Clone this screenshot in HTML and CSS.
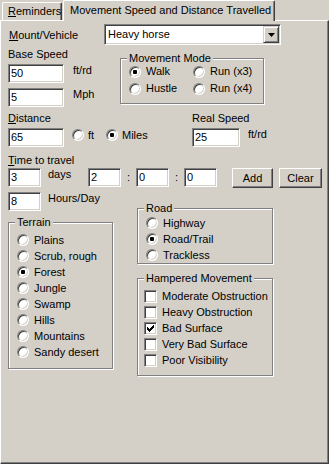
FILE: index.html
```html
<!DOCTYPE html>
<html>
<head>
<meta charset="utf-8">
<link rel="stylesheet" href="styles.css">
</head>
<body>
<div class="tabs">
  <div class="tab"><u>R</u>eminders</div>
  <div class="tab active">Movement Speed and Distance Travelled</div>
</div>
<div class="panel">
  <div class="mount">
    <div class="mount-lbl"><u>M</u>ount/Vehicle</div>
    <div class="combo">
      <div class="combo-text">Heavy horse</div>
      <div class="combo-btn"><svg width="7" height="4" viewBox="0 0 7 4"><polygon points="0,0 7,0 3.5,4" fill="#000"/></svg></div>
    </div>
  </div>

  <div class="speed">
    <div class="speed-col">
      <div class="lbl">Base Speed</div>
      <div class="fieldrow"><div class="edit w56">50</div><span class="unit">ft/rd</span></div>
      <div class="fieldrow r2"><div class="edit w56">5</div><span class="unit">Mph</span></div>
    </div>
    <div class="group g-move">
      <div class="gtitle">Movement Mode</div>
      <div class="opts2">
        <div class="opt"><span class="radio on"></span>Walk</div>
        <div class="opt"><span class="radio"></span>Run (x3)</div>
        <div class="opt"><span class="radio"></span>Hustle</div>
        <div class="opt"><span class="radio"></span>Run (x4)</div>
      </div>
    </div>
  </div>

  <div class="dist">
    <div class="dist-left">
      <div class="lbl"><u>D</u>istance</div>
      <div class="fieldrow">
        <div class="edit w56">65</div>
        <div class="opt dopt ft"><span class="radio"></span>ft</div>
        <div class="opt dopt"><span class="radio on"></span>Miles</div>
      </div>
    </div>
    <div class="dist-right">
      <div class="lbl">Real Speed</div>
      <div class="fieldrow"><div class="edit w48">25</div><span class="unit u8">ft/rd</span></div>
    </div>
  </div>

  <div class="lbl time-lbl"><u>T</u>ime to travel</div>
  <div class="time-row">
    <div class="edit w33">3</div>
    <span class="days">days</span>
    <div class="edit w33">2</div>
    <span class="colon">:</span>
    <div class="edit w33">0</div>
    <span class="colon">:</span>
    <div class="edit w33">0</div>
    <div class="btn add">Add</div>
    <div class="btn clear">Clear</div>
  </div>

  <div class="lower">
    <div class="lower-left">
      <div class="hours-row">
        <div class="edit w33">8</div>
        <span class="days">Hours/Day</span>
      </div>
      <div class="group g-terrain">
        <div class="gtitle">Terrain</div>
        <div class="opts1">
          <div class="opt"><span class="radio"></span>Plains</div>
          <div class="opt"><span class="radio"></span>Scrub, rough</div>
          <div class="opt"><span class="radio on"></span>Forest</div>
          <div class="opt"><span class="radio"></span>Jungle</div>
          <div class="opt"><span class="radio"></span>Swamp</div>
          <div class="opt"><span class="radio"></span>Hills</div>
          <div class="opt"><span class="radio"></span>Mountains</div>
          <div class="opt"><span class="radio"></span>Sandy desert</div>
        </div>
      </div>
    </div>
    <div class="lower-right">
      <div class="group g-road">
        <div class="gtitle">Road</div>
        <div class="opts1">
          <div class="opt"><span class="radio"></span>Highway</div>
          <div class="opt"><span class="radio on"></span>Road/Trail</div>
          <div class="opt"><span class="radio"></span>Trackless</div>
        </div>
      </div>
      <div class="group g-hamp">
        <div class="gtitle">Hampered Movement</div>
        <div class="opts1">
          <div class="opt"><span class="check"></span>Moderate Obstruction</div>
          <div class="opt"><span class="check"></span>Heavy Obstruction</div>
          <div class="opt"><span class="check"><svg width="7" height="7" viewBox="0 0 7 7" shape-rendering="crispEdges"><rect x="6" y="0" width="1" height="1"/><rect x="5" y="1" width="2" height="1"/><rect x="0" y="2" width="1" height="1"/><rect x="4" y="2" width="3" height="1"/><rect x="0" y="3" width="2" height="1"/><rect x="3" y="3" width="3" height="1"/><rect x="0" y="4" width="5" height="1"/><rect x="1" y="5" width="3" height="1"/><rect x="2" y="6" width="1" height="1"/></svg></span>Bad Surface</div>
          <div class="opt"><span class="check"></span>Very Bad Surface</div>
          <div class="opt"><span class="check"></span>Poor Visibility</div>
        </div>
      </div>
    </div>
  </div>
</div>
</body>
</html>
```
FILE: styles.css
```css
* { box-sizing: border-box; }
html, body { margin: 0; padding: 0; }
body {
  width: 329px;
  height: 464px;
  overflow: hidden;
  background: #d4d0c8;
  font-family: "Liberation Sans", Arial, sans-serif;
  font-size: 11px;
  color: #000;
}
u { text-decoration: underline; text-underline-offset: 1px; }

/* Tabs */
.tabs { display: flex; align-items: flex-end; height: 20px; }
.tab {
  height: 18px;
  width: 60px;
  margin-left: 2px;
  padding-left: 5px;
  line-height: 17px;
  white-space: nowrap;
  background: #d4d0c8;
  border: 1px solid;
  border-color: #fff #404040 transparent #fff;
  border-bottom: 0;
  border-radius: 2px 2px 0 0;
  box-shadow: inset -1px 0 #808080;
}
.tab.active {
  position: relative;
  z-index: 1;
  height: 21px;
  width: 212px;
  margin-left: 1px;
  margin-bottom: -1px;
  padding-left: 6px;
  line-height: 18px;
}

/* Panel */
.panel {
  height: 444px;
  border: 1px solid;
  border-color: #fff #404040 #404040 #fff;
  box-shadow: inset -1px -1px #808080;
  padding-left: 7px;
}

.lbl { height: 13px; line-height: 13px; white-space: nowrap; }

/* Mount row */
.mount { display: flex; align-items: center; height: 21px; margin-top: 3px; }
.mount-lbl { width: 96px; padding-left: 1px; white-space: nowrap; }
.combo {
  display: flex;
  width: 177px;
  height: 21px;
  padding: 1px;
  background: #fff;
  border: 1px solid;
  border-color: #808080 #fff #fff #808080;
  box-shadow: inset 1px 1px #404040, inset -1px -1px #d4d0c8;
}
.combo-text { flex: 1; padding-left: 2px; line-height: 17px; }
.combo-btn {
  width: 16px;
  height: 17px;
  display: flex;
  align-items: center;
  justify-content: center;
  background: #d4d0c8;
  border: 1px solid;
  border-color: #d4d0c8 #404040 #404040 #d4d0c8;
  box-shadow: inset 1px 1px #fff, inset -1px -1px #808080;
}

/* Edits */
.edit {
  height: 19px;
  padding-left: 2px;
  line-height: 17px;
  background: #fff;
  border: 1px solid;
  border-color: #808080 #fff #fff #808080;
  box-shadow: inset 1px 1px #404040, inset -1px -1px #d4d0c8;
  flex: none;
}
.w56 { width: 56px; }
.w48 { width: 48px; }
.w33 { width: 33px; }

.fieldrow { display: flex; align-items: flex-start; margin-top: 3px; }
.fieldrow.r2 { margin-top: 5px; }
.unit { margin-left: 9px; line-height: 13px; white-space: nowrap; }
.unit.u8 { margin-left: 8px; }

/* Speed row */
.speed { display: flex; align-items: flex-start; }
.speed-col { width: 112px; padding-top: 3px; }

/* Group boxes */
.group {
  border: 1px solid #808080;
  box-shadow: inset 1px 1px #fff, 1px 1px #fff;
  flex: none;
}
.gtitle {
  width: fit-content;
  height: 12px;
  margin: -7px 0 0 6px;
  padding: 0 2px;
  line-height: 12px;
  background: #d4d0c8;
  white-space: nowrap;
}
.g-move { width: 144px; height: 46px; margin-top: 13px; }
.opts2 {
  display: grid;
  grid-template-columns: 64px auto;
  padding-left: 8px;
  margin-top: -1px;
}
.g-move .opt { height: 17px; }

.opt {
  display: flex;
  align-items: center;
  gap: 5px;
  height: 16px;
  line-height: 13px;
  white-space: nowrap;
}
.radio {
  width: 12px;
  height: 12px;
  flex: none;
  border-radius: 50%;
  background: #fff;
  border: 1px solid;
  border-color: #808080 #fff #fff #808080;
  box-shadow: inset 1px 1px #404040, inset -1px -1px #d4d0c8;
  display: flex;
  align-items: center;
  justify-content: center;
}
.radio.on::after {
  content: "";
  width: 4px;
  height: 4px;
  border-radius: 1px;
  background: #000;
}
.check {
  width: 13px;
  height: 13px;
  flex: none;
  background: #fff;
  border: 1px solid;
  border-color: #808080 #fff #fff #808080;
  box-shadow: inset 1px 1px #404040, inset -1px -1px #d4d0c8;
  display: flex;
  align-items: center;
  justify-content: center;
}

/* Distance row */
.dist { display: flex; margin-top: 5px; }
.dist-left { width: 184px; }
.dopt { height: 14px; gap: 4px; }
.dopt.ft { margin-left: 8px; width: 34px; }

/* Time */
.time-lbl { margin-top: 7px; }
.time-row { display: flex; align-items: flex-start; margin-top: 1px; }
.days { width: 47px; padding-left: 7px; line-height: 13px; white-space: nowrap; flex: none; }
.colon { width: 15px; text-align: center; line-height: 19px; flex: none; }
.btn {
  height: 20px;
  display: flex;
  align-items: center;
  justify-content: center;
  border: 1px solid;
  border-color: #fff #404040 #404040 #fff;
  box-shadow: inset -1px -1px #808080;
  flex: none;
}
.btn.add { width: 41px; margin-left: 15px; }
.btn.clear { width: 43px; margin-left: 6px; }

/* Lower area */
.lower {
  display: grid;
  grid-template-columns: 129px 136px;
  align-items: start;
  margin-top: 4px;
}
.hours-row { display: flex; align-items: flex-start; }
.hours-row .days { width: auto; }
.g-terrain { width: 105px; height: 147px; margin-top: 11px; }
.opts1 { padding-left: 8px; margin-top: 4px; }
.g-road { width: 136px; height: 56px; margin-top: 16px; }
.g-road .opts1 { margin-top: 1px; }
.g-hamp { width: 136px; height: 98px; margin-top: 14px; }
.g-hamp .opts1 { padding-left: 6px; }
```
